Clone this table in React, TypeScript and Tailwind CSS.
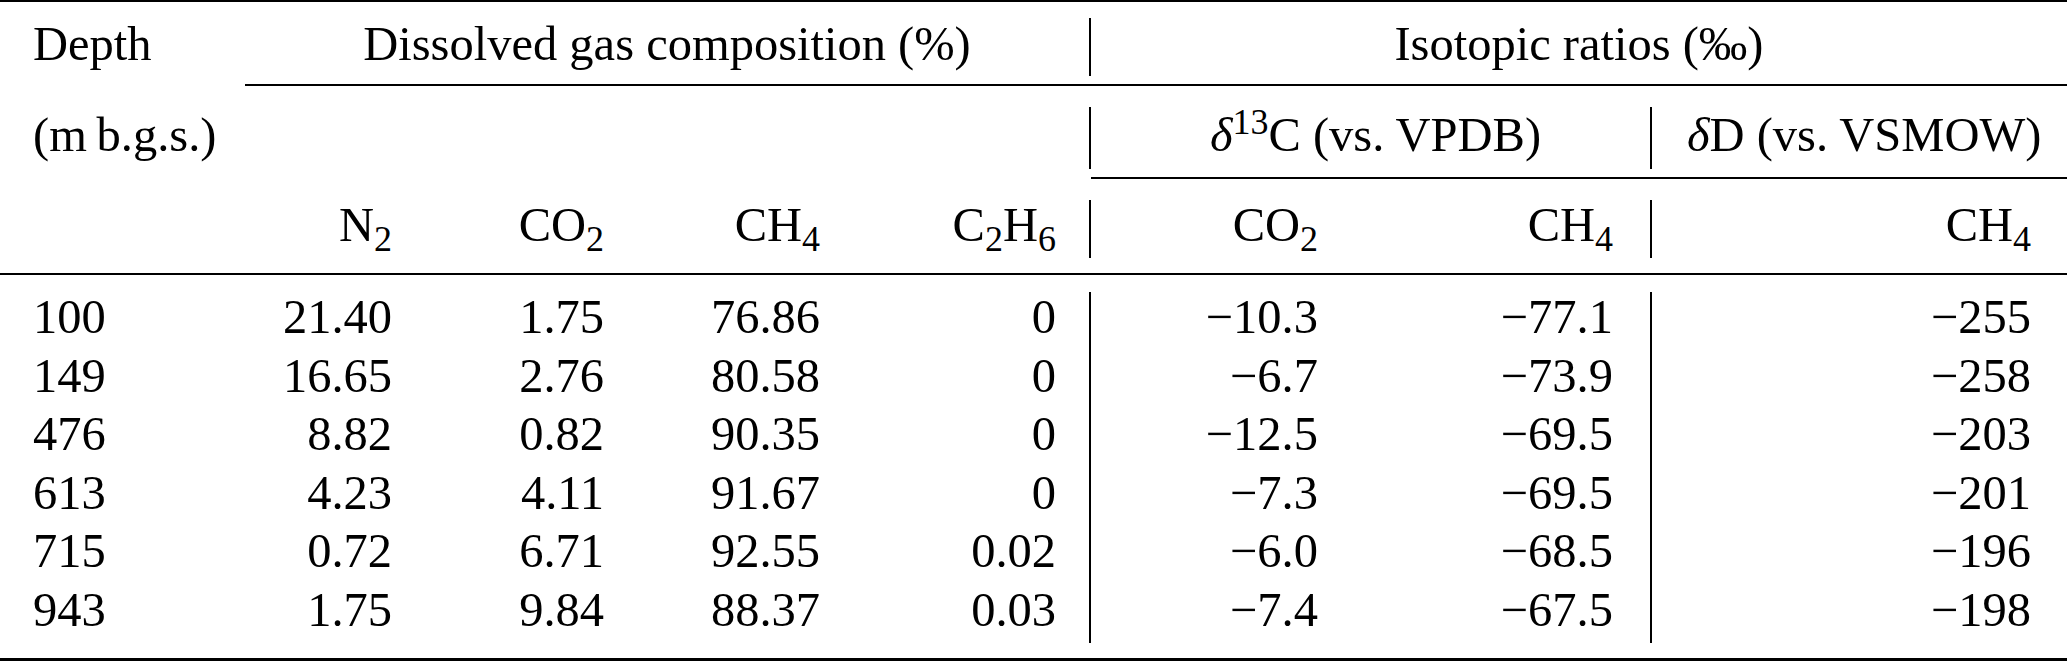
import React from "react";

const COLS = "grid grid-cols-[245px_182px_212px_216px_236px_262px_297px_417px]";

const ROWS = [
  ["100", "21.40", "1.75", "76.86", "0", "−10.3", "−77.1", "−255"],
  ["149", "16.65", "2.76", "80.58", "0", "−6.7", "−73.9", "−258"],
  ["476", "8.82", "0.82", "90.35", "0", "−12.5", "−69.5", "−203"],
  ["613", "4.23", "4.11", "91.67", "0", "−7.3", "−69.5", "−201"],
  ["715", "0.72", "6.71", "92.55", "0.02", "−6.0", "−68.5", "−196"],
  ["943", "1.75", "9.84", "88.37", "0.03", "−7.4", "−67.5", "−198"],
];

// per-column alignment, padding and the two vertical rules
const CELL = [
  "pl-[33px] text-left",
  "pr-[35px] text-right",
  "pr-[35px] text-right",
  "pr-[35px] text-right",
  "pr-[33px] text-right border-r-2 border-black",
  "pr-[35px] text-right",
  "pr-[37px] text-right",
  "pr-[36px] text-right border-l-2 border-black",
];

function Sub({ children }: { children: React.ReactNode }) {
  return <sub className="text-[36px] -bottom-[10px]">{children}</sub>;
}

export default function App() {
  return (
    <div className="w-[2067px] h-[662px] overflow-hidden bg-white text-black font-['Liberation_Serif','Times_New_Roman',serif] text-[48.5px]">
      {/* top rule */}
      <div className="h-[2px] bg-black" />

      {/* header row 1 */}
      <div className={`${COLS} pt-[16px] pb-[8px]`}>
        <div className="h-[58px] leading-[51.3px] pl-[33px]">Depth</div>
        <div className="col-span-4 h-[58px] leading-[51.3px] text-center border-r-2 border-black">
          Dissolved gas composition (%)
        </div>
        <div className="col-span-3 h-[58px] leading-[51.3px] text-center">Isotopic ratios (‰)</div>
      </div>

      <div className={COLS}>
        <div className="col-start-2 col-span-7 h-[2px] bg-black" />
      </div>

      {/* header row 2 */}
      <div className={`${COLS} pt-[21px] pb-[8px]`}>
        <div className="h-[62px] leading-[55.3px] pl-[33px]">(m{"\u2009"}b.g.s.)</div>
        <div className="col-span-4 h-[62px] border-r-2 border-black" />
        <div className="col-span-2 h-[62px] leading-[55.3px] text-center pl-[47px] pr-[37px] whitespace-nowrap">
          <i>δ</i>
          <sup className="text-[36px] -top-[17px]">13</sup>C (vs. VPDB)
        </div>
        <div className="h-[62px] leading-[55.3px] text-center pl-[35px] pr-[36px] border-l-2 border-black whitespace-nowrap">
          <i>δ</i>D (vs. VSMOW)
        </div>
      </div>

      <div className={COLS}>
        <div className="col-start-6 col-span-3 h-[2px] bg-black" />
      </div>

      {/* header row 3 */}
      <div className={`${COLS} pt-[21px] pb-[15px]`}>
        <div className="h-[58px]" />
        <div className={`h-[58px] leading-[49.3px] ${CELL[1]}`}>
          N<Sub>2</Sub>
        </div>
        <div className={`h-[58px] leading-[49.3px] ${CELL[2]}`}>
          CO<Sub>2</Sub>
        </div>
        <div className={`h-[58px] leading-[49.3px] ${CELL[3]}`}>
          CH<Sub>4</Sub>
        </div>
        <div className={`h-[58px] leading-[49.3px] ${CELL[4]}`}>
          C<Sub>2</Sub>H<Sub>6</Sub>
        </div>
        <div className={`h-[58px] leading-[49.3px] ${CELL[5]}`}>
          CO<Sub>2</Sub>
        </div>
        <div className={`h-[58px] leading-[49.3px] ${CELL[6]}`}>
          CH<Sub>4</Sub>
        </div>
        <div className={`h-[58px] leading-[49.3px] ${CELL[7]}`}>
          CH<Sub>4</Sub>
        </div>
      </div>

      {/* midrule */}
      <div className="h-[2px] bg-black" />

      {/* body */}
      <div className="pt-[17px] pb-[15px]">
        {ROWS.map((row, r) => (
          <div key={r} className={COLS}>
            {row.map((v, c) => (
              <div key={c} className={`h-[58.5px] leading-[49.3px] whitespace-nowrap ${CELL[c]}`}>
                {v}
              </div>
            ))}
          </div>
        ))}
      </div>

      {/* bottom rule */}
      <div className="h-[3px] bg-black" />
    </div>
  );
}
